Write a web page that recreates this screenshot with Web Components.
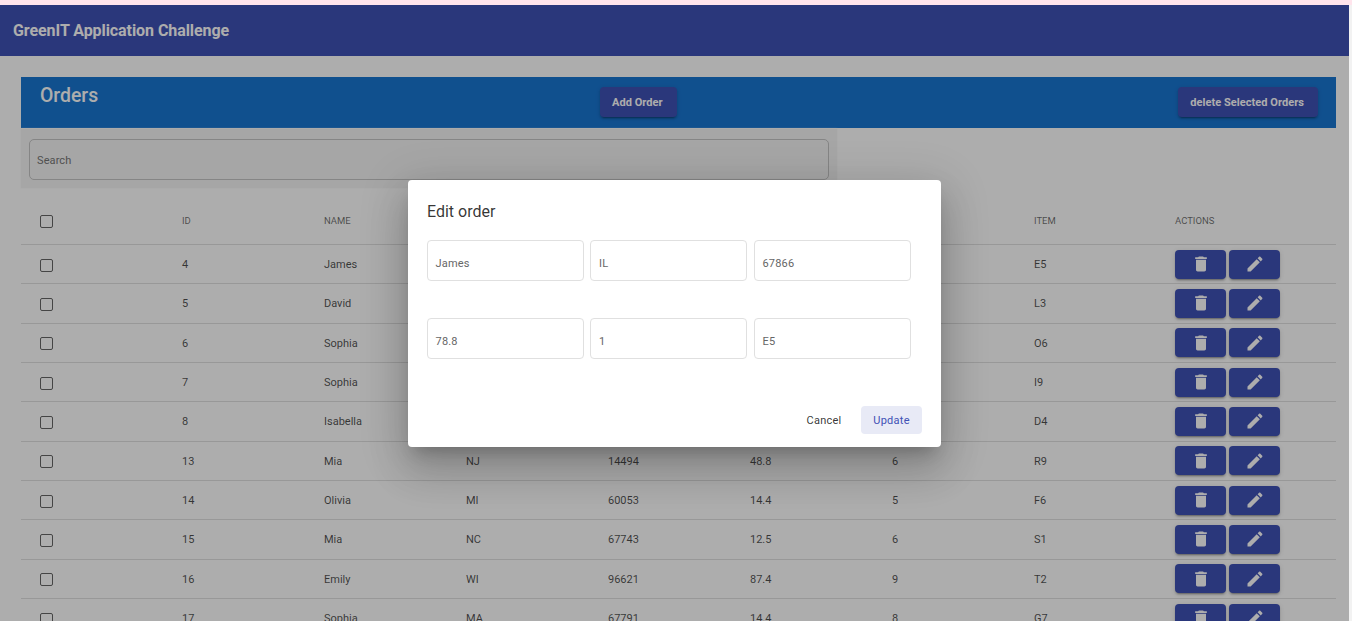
<!DOCTYPE html>
<html>
<head>
<meta charset="utf-8">
<title>Orders</title>
<style>
  html, body { margin: 0; height: 621px; overflow: hidden; }
  body { font-family: Roboto, sans-serif; background: #f2f2f2; }
</style>
</head>
<body>
<app-root></app-root>

<script>
const TRASH = `<svg viewBox="0 0 24 24" width="20" height="20"><path fill="currentColor" d="M6 19c0 1.1.9 2 2 2h8c1.1 0 2-.9 2-2V7H6v12zM19 4h-3.5l-1-1h-5l-1 1H5v2h14V4z"/></svg>`;
const PENCIL = `<svg viewBox="0 0 24 24" width="20" height="20"><path fill="currentColor" d="M3 17.25V21h3.75L17.81 9.94l-3.75-3.75L3 17.25zM20.71 7.04c.39-.39.39-1.02 0-1.41l-2.34-2.34c-.39-.39-1.02-.39-1.41 0l-1.83 1.83 3.75 3.75 1.83-1.83z"/></svg>`;

const ORDERS = [
  { id: 4, name: "James", item: "E5" },
  { id: 5, name: "David", item: "L3" },
  { id: 6, name: "Sophia", item: "O6" },
  { id: 7, name: "Sophia", item: "I9" },
  { id: 8, name: "Isabella", item: "D4" },
  { id: 13, name: "Mia", state: "NJ", zip: 14494, price: 48.8, qty: 6, item: "R9" },
  { id: 14, name: "Olivia", state: "MI", zip: 60053, price: 14.4, qty: 5, item: "F6" },
  { id: 15, name: "Mia", state: "NC", zip: 67743, price: 12.5, qty: 6, item: "S1" },
  { id: 16, name: "Emily", state: "WI", zip: 96621, price: 87.4, qty: 9, item: "T2" },
  { id: 17, name: "Sophia", state: "MA", zip: 67791, price: 14.4, qty: 8, item: "G7" }
];

class RaisedButton extends HTMLElement {
  constructor() {
    super();
    this.attachShadow({ mode: "open" });
    this.shadowRoot.innerHTML = `
    <style>
      :host {
        display: inline-flex;
        align-items: center;
        justify-content: center;
        box-sizing: border-box;
        height: 30px;
        padding: 0 14px 0 12px;
        border-radius: 4px;
        background: #3f51b5;
        color: #fff;
        font-size: 11px;
        font-weight: 700;
        letter-spacing: .05px;
        box-shadow: 0 3px 1px -2px rgba(0,0,0,.2), 0 2px 2px 0 rgba(0,0,0,.14), 0 1px 5px 0 rgba(0,0,0,.12);
      }
      :host([icon]) { width: 51px; height: 29px; padding: 0; }
    </style>
    <slot></slot>`;
  }
}

class AppToolbar extends HTMLElement {
  constructor() {
    super();
    this.attachShadow({ mode: "open" });
    this.shadowRoot.innerHTML = `
    <style>
      :host {
        display: flex;
        align-items: center;
        height: 51px;
        padding-left: 13px;
        background: #3f51b5;
        color: #fff;
        font-size: 16px;
        font-weight: 700;
        letter-spacing: -.07px;
      }
    </style>
    <slot></slot>`;
  }
}

class OrdersHeader extends HTMLElement {
  constructor() {
    super();
    this.attachShadow({ mode: "open" });
    this.shadowRoot.innerHTML = `
    <style>
      :host {
        display: grid;
        grid-template-columns: 560px 1fr auto;
        height: 51px;
        padding: 0 18px 0 19px;
        background: #1976d2;
        color: #fff;
      }
      h1 { margin: 7px 0 0; font-size: 19.4px; font-weight: 500; line-height: 24px; }
      .mid, .end { padding-top: 10px; }
    </style>
    <h1>Orders</h1>
    <div class="mid"><raised-button>Add Order</raised-button></div>
    <div class="end"><raised-button>delete Selected Orders</raised-button></div>`;
  }
}

class SearchBox extends HTMLElement {
  constructor() {
    super();
    this.attachShadow({ mode: "open" });
    this.shadowRoot.innerHTML = `
    <style>
      :host {
        display: block;
        width: 800px;
        padding: 10px 8px 8px;
        margin-top: 1px;
        background: #f5f5f5;
        box-shadow: 0 0 2px #f5f5f5;
      }
      div {
        box-sizing: border-box;
        display: flex;
        align-items: center;
        height: 41px;
        padding: 2px 0 0 7px;
        border: 1px solid #c4c4c4;
        border-radius: 5px;
        font-size: 11px;
        letter-spacing: .1px;
        color: #777;
      }
    </style>
    <div><slot></slot></div>`;
  }
}

class CheckBox extends HTMLElement {
  constructor() {
    super();
    this.attachShadow({ mode: "open" });
    this.shadowRoot.innerHTML = `
    <style>
      :host {
        display: block;
        box-sizing: border-box;
        width: 13px;
        height: 13px;
        border: 1px solid #666;
        border-radius: 2px;
      }
    </style>`;
  }
}

class OrderRow extends HTMLElement {
  constructor() {
    super();
    this.attachShadow({ mode: "open" });
  }

  connectedCallback() {
    const header = this.hasAttribute("header");
    const cells = ["id", "name", "state", "zip", "price", "qty", "item"]
      .map(key => `<span>${this.getAttribute(key) || ""}</span>`).join("");
    this.shadowRoot.innerHTML = `
    <style>
      :host {
        display: grid;
        grid-template-columns: repeat(8, 142px) 1fr;
        align-items: center;
        box-sizing: border-box;
        height: 39.33px;
        border-bottom: 1px solid #e0e0e0;
        font-size: 11px;
        color: rgba(0,0,0,.7);
      }
      :host([header]) { height: 46px; color: rgba(0,0,0,.58); font-size: 9.5px; }
      span, div { padding-left: 19px; }
      span { padding-top: 1px; }
      :host([header]) span { padding-top: 0; padding-bottom: 2px; }
      check-box { margin-top: 2px; }
      :host([header]) check-box { margin-top: 0; }
      .actions { display: flex; gap: 3px; padding-left: 18px; color: #fff; }
    </style>
    <div><check-box></check-box></div>
    ${cells}
    ${header
      ? `<span style="padding-left:18px">ACTIONS</span>`
      : `<div class="actions"><raised-button icon>${TRASH}</raised-button><raised-button icon>${PENCIL}</raised-button></div>`}`;
  }
}

class OrdersTable extends HTMLElement {
  constructor() {
    super();
    this.attachShadow({ mode: "open" });
    const rows = ORDERS.map(o => `<order-row id="${o.id}" name="${o.name}" state="${o.state || ""}"
      zip="${o.zip || ""}" price="${o.price || ""}" qty="${o.qty || ""}" item="${o.item}"></order-row>`).join("");
    this.shadowRoot.innerHTML = `
    <style>
      :host { display: block; margin-top: 11px; }
    </style>
    <order-row header id="ID" name="NAME" item="ITEM"></order-row>
    ${rows}`;
  }
}

class EditDialog extends HTMLElement {
  constructor() {
    super();
    this.attachShadow({ mode: "open" });
    const field = value => `<div class="field">${value}</div>`;
    this.shadowRoot.innerHTML = `
    <style>
      :host {
        position: absolute;
        left: 408px;
        top: 180px;
        box-sizing: border-box;
        width: 533px;
        height: 267px;
        padding: 20px 19px 0;
        background: #fff;
        border-radius: 4px;
        box-shadow: 0 11px 15px -7px rgba(0,0,0,.2), 0 24px 38px 3px rgba(0,0,0,.14), 0 9px 46px 8px rgba(0,0,0,.12);
        color: rgba(0,0,0,.8);
      }
      h2 { margin: 0; font-size: 16px; font-weight: 400; line-height: 24px; }
      .grid {
        display: grid;
        grid-template-columns: repeat(3, 156.8px);
        column-gap: 6.7px;
        row-gap: 37px;
        margin-top: 16px;
      }
      .field {
        box-sizing: border-box;
        height: 41px;
        padding: 6px 0 0 7.5px;
        display: flex;
        align-items: center;
        border: 1px solid #e0e0e0;
        border-radius: 4px;
        font-size: 11px;
        letter-spacing: .2px;
        color: #666;
      }
      .buttons {
        display: flex;
        justify-content: flex-end;
        align-items: center;
        gap: 8px;
        margin-top: 47px;
        font-size: 11px;
        letter-spacing: .25px;
      }
      .buttons span {
        display: flex;
        align-items: center;
        justify-content: center;
        height: 28px;
        width: 58px;
        border-radius: 4px;
      }
      .buttons .primary { background: #e8eaf6; color: #3f51b5; width: 61px; }
    </style>
    <h2>Edit order</h2>
    <div class="grid">
      ${["James", "IL", "67866", "78.8", "1", "E5"].map(field).join("")}
    </div>
    <div class="buttons"><span>Cancel</span><span class="primary">Update</span></div>`;
  }
}

class AppRoot extends HTMLElement {
  constructor() {
    super();
    this.attachShadow({ mode: "open" });
    this.shadowRoot.innerHTML = `
    <style>
      :host { display: block; height: 621px; overflow: hidden; }
      .strip { height: 5px; background: #ffe4ec; }
      .page { height: 616px; margin-right: 3px; background: #fff; overflow: hidden; }
      main { padding: 21px 13px 0 21px; }
      .backdrop { position: absolute; inset: 5px 3px 0 0; background: rgba(0,0,0,.32); }
    </style>
    <div class="strip"></div>
    <div class="page">
      <app-toolbar>GreenIT Application Challenge</app-toolbar>
      <main>
        <orders-header></orders-header>
        <search-box>Search</search-box>
        <orders-table></orders-table>
      </main>
    </div>
    <div class="backdrop"></div>
    <edit-dialog></edit-dialog>`;
  }
}

customElements.define("raised-button", RaisedButton);
customElements.define("app-toolbar", AppToolbar);
customElements.define("orders-header", OrdersHeader);
customElements.define("search-box", SearchBox);
customElements.define("check-box", CheckBox);
customElements.define("order-row", OrderRow);
customElements.define("orders-table", OrdersTable);
customElements.define("edit-dialog", EditDialog);
customElements.define("app-root", AppRoot);
</script>
</body>
</html>
